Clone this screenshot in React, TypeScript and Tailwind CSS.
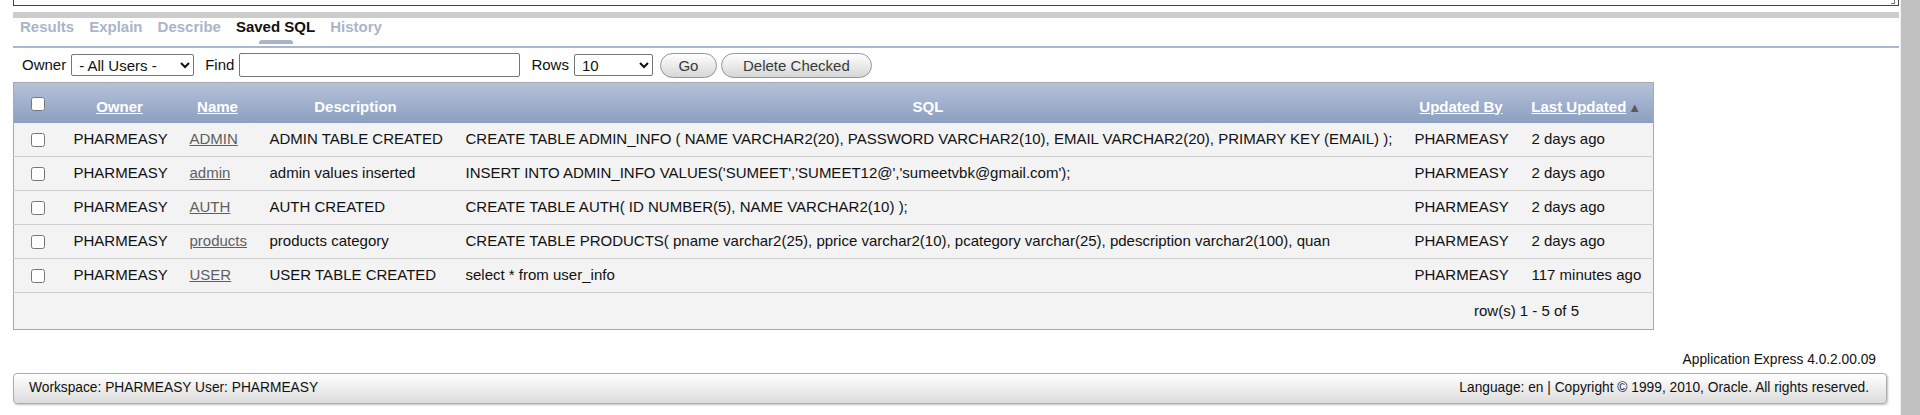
import React from "react";

type Row = {
  name: string;
  description: string;
  sql: string;
  updated: string;
};

const rows: Row[] = [
  {
    name: "ADMIN",
    description: "ADMIN TABLE CREATED",
    sql: "CREATE TABLE ADMIN_INFO ( NAME VARCHAR2(20), PASSWORD VARCHAR2(10), EMAIL VARCHAR2(20), PRIMARY KEY (EMAIL) );",
    updated: "2 days ago",
  },
  {
    name: "admin",
    description: "admin values inserted",
    sql: "INSERT INTO ADMIN_INFO VALUES('SUMEET','SUMEET12@','sumeetvbk@gmail.com');",
    updated: "2 days ago",
  },
  {
    name: "AUTH",
    description: "AUTH CREATED",
    sql: "CREATE TABLE AUTH( ID NUMBER(5), NAME VARCHAR2(10) );",
    updated: "2 days ago",
  },
  {
    name: "products",
    description: "products category",
    sql: "CREATE TABLE PRODUCTS( pname varchar2(25), pprice varchar2(10), pcategory varchar(25), pdescription varchar2(100), quan",
    updated: "2 days ago",
  },
  {
    name: "USER",
    description: "USER TABLE CREATED",
    sql: "select * from user_info",
    updated: "117 minutes ago",
  },
];

const tabs = ["Results", "Explain", "Describe", "Saved SQL", "History"];

function PillButton({ children, className }: { children: React.ReactNode; className: string }) {
  return (
    <button
      className={`h-[25px] rounded-full border border-[#959595] bg-gradient-to-b from-[#ffffff] to-[#d6d6d6] text-[15px] leading-none text-[#3a3a3a] ${className}`}
    >
      {children}
    </button>
  );
}

export default function App() {
  return (
    <div className="flex h-[415px] w-[1920px] overflow-hidden bg-white font-['Liberation_Sans',Arial,sans-serif] text-[#111]">
      <div className="flex w-[1900px] flex-col pl-[13px] pr-[1px]">
        {/* bottom of the SQL textarea */}
        <div className="relative h-[6px] border-x border-b border-[#444]">
          <span className="absolute right-[3px] top-0 h-[4px] w-[4px] border-r border-b border-[#777]" />
        </div>

        <div className="mt-[6px] h-[6px] bg-[#cccccc]" />

        {/* Tabs */}
        <div className="flex h-[28px] items-start gap-[15px] pl-[7px]">
          {tabs.map((t) => {
            const active = t === "Saved SQL";
            return (
              <div key={t} className="flex flex-col items-center">
                <span
                  className={`text-[15px] font-bold leading-[18px] ${active ? "text-[#111]" : "text-[#aab5c9]"}`}
                >
                  {t}
                </span>
                {active && <span className="mt-[4px] h-[4px] w-[34px] rounded-t-[3px] bg-[#a7b4c9]" />}
              </div>
            );
          })}
        </div>

        <div className="h-[2px] bg-[#a9b7cf]" />

        {/* Toolbar */}
        <div className="flex h-[34px] items-center pl-[9px] text-[15px]">
          <span>Owner</span>
          <select className="ml-[5px] h-[22px] w-[123px] rounded-[2px] border border-[#767676] bg-white pl-[3px] text-[15px]">
            <option>- All Users -</option>
          </select>
          <span className="ml-[11px]">Find</span>
          <input className="ml-[5px] h-[24px] w-[281px] rounded-[2px] border border-[#767676] bg-white" />
          <span className="ml-[11px]">Rows</span>
          <select className="ml-[5px] h-[22px] w-[79px] rounded-[2px] border border-[#767676] bg-white pl-[3px] text-[15px]">
            <option>10</option>
          </select>
          <PillButton className="ml-[7px] w-[57px]">Go</PillButton>
          <PillButton className="ml-[4px] w-[151px]">Delete Checked</PillButton>
        </div>

        {/* Saved SQL report */}
        <table className="w-[1641px] table-fixed border-collapse border border-[#a9a9a9] text-[15px]">
          <colgroup>
            <col className="w-[48px]" />
            <col className="w-[116px]" />
            <col className="w-[80px]" />
            <col className="w-[196px]" />
            <col className="w-[949px]" />
            <col className="w-[117px]" />
            <col className="w-[134px]" />
          </colgroup>
          <thead>
            <tr className="h-[40px] bg-gradient-to-b from-[#b5c2d9] to-[#8c9fc0] text-[15px] font-bold text-white">
              <th className="text-center align-middle">
                <input type="checkbox" className="h-[14px] w-[14px] align-middle" />
              </th>
              <th className="pt-[8px] text-center">
                <a className="underline">Owner</a>
              </th>
              <th className="pt-[8px] text-center">
                <a className="underline">Name</a>
              </th>
              <th className="pt-[8px] text-center">Description</th>
              <th className="pt-[8px] text-center">SQL</th>
              <th className="pt-[8px] text-center">
                <a className="underline">Updated By</a>
              </th>
              <th className="pt-[8px] text-center">
                <a className="underline">Last Updated</a>
                <span className="ml-[2px] text-[13px] text-[#5a5a5a]">▲</span>
              </th>
            </tr>
          </thead>
          <tbody>
            {rows.map((r) => (
              <tr key={r.name} className="h-[34px] border-b border-[#cfcfcf] bg-[#f3f3f3]">
                <td className="text-center align-middle">
                  <input type="checkbox" className="h-[14px] w-[14px] align-middle" />
                </td>
                <td className="pl-[12px]">PHARMEASY</td>
                <td className="pl-[12px]">
                  <a className="text-[#5f5f5f] underline">{r.name}</a>
                </td>
                <td className="pl-[12px]">{r.description}</td>
                <td className="overflow-hidden whitespace-nowrap pl-[12px]">{r.sql}</td>
                <td className="pl-[12px]">PHARMEASY</td>
                <td className="whitespace-nowrap pl-[12px]">{r.updated}</td>
              </tr>
            ))}
            <tr className="h-[37px] bg-[#f3f3f3]">
              <td colSpan={7} className="pr-[74px] text-right">
                row(s) 1 - 5 of 5
              </td>
            </tr>
          </tbody>
        </table>

        <div className="mt-[22px] pr-[23px] text-right text-[13.75px] leading-[16px]">Application Express 4.0.2.00.09</div>

        {/* Page footer */}
        <div className="mr-[12px] mt-[5px] flex h-[31px] items-center justify-between rounded-[4px] border border-[#acacac] bg-gradient-to-b from-[#ffffff] to-[#dcdcdc] px-[15px] text-[13.75px] shadow-[1px_1px_2px_rgba(0,0,0,0.25)]">
          <span>Workspace: PHARMEASY User: PHARMEASY</span>
          <span className="pr-[2px]">Language: en | Copyright © 1999, 2010, Oracle. All rights reserved.</span>
        </div>
      </div>

      {/* scrollbar */}
      <div className="w-[20px] border-l border-[#f1f1f1] bg-[#c1c1c1]" />
    </div>
  );
}
